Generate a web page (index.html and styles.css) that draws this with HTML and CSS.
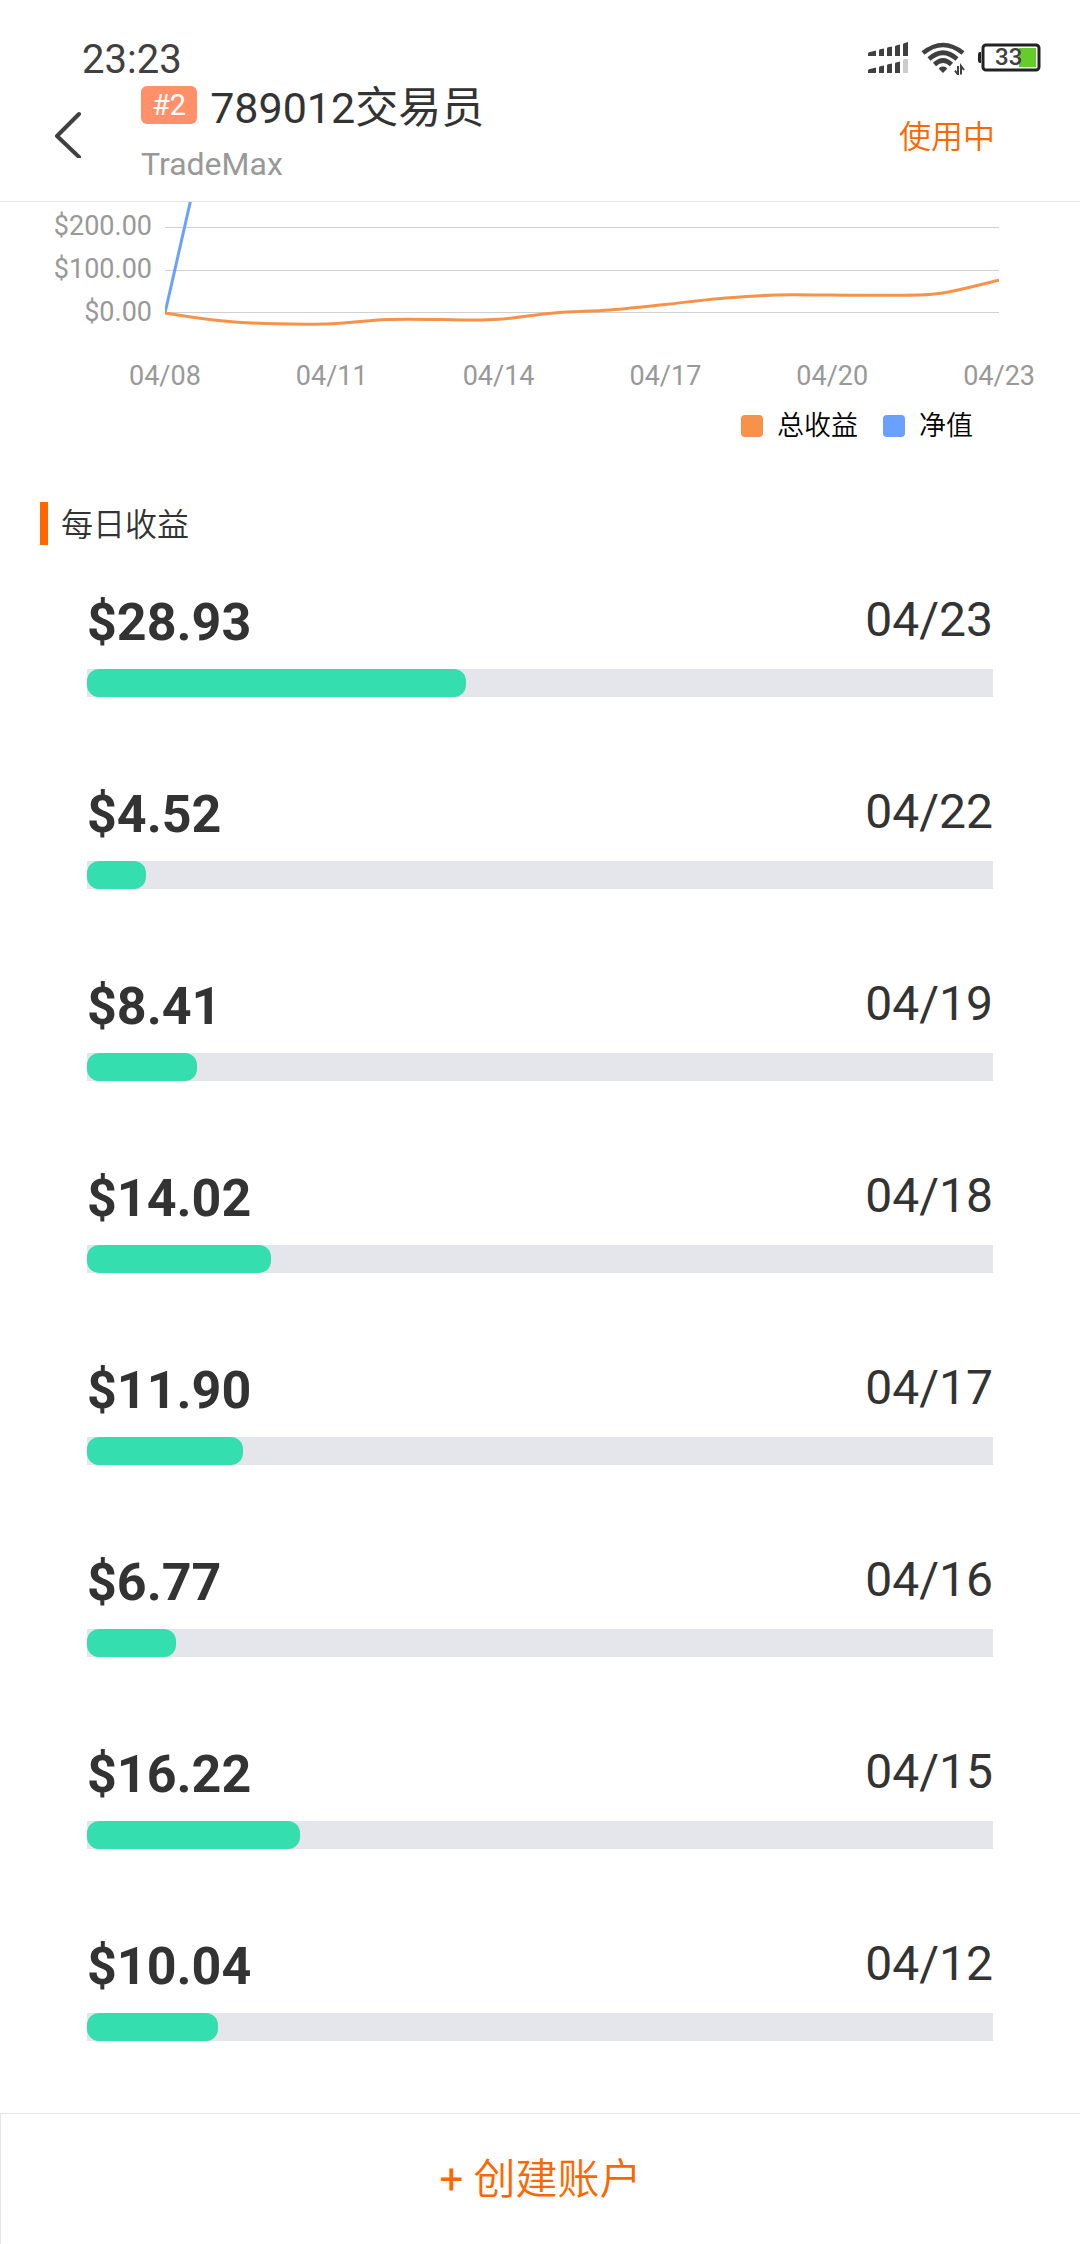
FILE: index.html
```html
<!DOCTYPE html>
<html lang="zh-CN">
<head>
    <meta charset="UTF-8">
    <meta name="viewport" content="width=device-width, initial-scale=1.0">
    <title>789012交易员</title>
    <link rel="stylesheet" href="styles.css">
</head>
<body>
    <div class="status-bar">
        <span class="time">23:23</span>
        <div class="status-icons">
            <svg class="signal" width="40" height="32" viewBox="0 0 40 32" fill="#404040">
                <path d="M0 11.5 Q0 10.5 1 10.2 L8 8.6 V14 H0z"/>
                <path d="M11 8.5 Q11 7.5 12 7.2 L16 6.4 V14 H11z"/>
                <path d="M19 6.6 Q19 5.6 20 5.3 L24 4.4 V14 H19z"/>
                <path d="M27 4.8 Q27 3.8 28 3.5 L32 2.4 V14 H27z"/>
                <path d="M35 2.6 Q35 1.6 36 1.2 L40 0 V14 H35z"/>
                <path d="M0 28.5 Q0 27.5 1 27.2 L8 25.6 V31 H0z"/>
                <path d="M11 25.5 Q11 24.5 12 24.2 L16 23.4 V31 H11z"/>
                <path d="M19 23.6 Q19 22.6 20 22.3 L24 21.4 V31 H19z"/>
                <path d="M27 21.8 Q27 20.8 28 20.5 L32 19.4 V31 H27z"/>
                <path fill="#cccccc" d="M35 19 Q35 17 37 17 H40 V31 H35z"/>
            </svg>
            <svg class="wifi" width="44" height="34" viewBox="0 0 44 34" fill="none" stroke="#404040" stroke-width="4.6">
                <path d="M2 12 Q22 -4 42 12"/>
                <path d="M8 18 Q22 5.5 36 18"/>
                <path d="M13.5 23.5 Q22 15.5 30.5 23.5"/>
                <path fill="#404040" stroke="none" d="M22 32 L18 28 Q18 25.5 22 25.5 Q26 25.5 26 28z"/>
                <path stroke-width="2" d="M37 25 V33.5 L34 29.6 M40 33.5 V25 L43 29"/>
            </svg>
            <div class="battery">
                <svg width="64" height="30" viewBox="0 0 64 30">
                    <path fill="#222222" d="M3 9 V20 H2 Q0 20 0 17 V12 Q0 9 2 9z"/>
                    <rect x="5" y="2" width="56" height="25" rx="3" fill="#ffffff" stroke="#222222" stroke-width="3"/>
                    <rect x="41" y="5" width="17" height="19" fill="#66cc2c"/>
                </svg>
                <span class="battery-level">33</span>
            </div>
        </div>
    </div>

    <header class="header">
        <button class="back" type="button" aria-label="返回">
            <svg width="28" height="48" viewBox="0 0 28 48" fill="none" stroke="#404040" stroke-width="4" stroke-linecap="round" stroke-linejoin="round">
                <path d="M25 4 L3 26 L25 47"/>
            </svg>
        </button>
        <div class="trader">
            <div class="trader-line">
                <span class="badge">#2</span>
                <h1>789012交易员</h1>
            </div>
            <p class="broker">TradeMax</p>
        </div>
        <span class="state">使用中</span>
    </header>

    <main>
        <section class="chart">
            <div class="chart-body">
                <div class="y-labels">
                    <span>$200.00</span>
                    <span>$100.00</span>
                    <span>$0.00</span>
                </div>
                <svg class="plot" viewBox="0 0 834 132" preserveAspectRatio="none">
                    <g class="grid">
                        <path d="M0 25.5 H834"/>
                        <path d="M0 68.5 H834"/>
                        <path d="M0 110.5 H834"/>
                    </g>
                    <path class="line net" d="M0 111 L25.5 -1"/>
                    <path class="line profit" d="M0 111 C18 114 37 117 56 118.7 C74 120.5 93 121.4 111 121.8 C130 122.2 148 122.5 167 121.7 C185 120.8 204 118 222 117.4 C241 116.8 259 117.2 278 117.5 C297 117.9 315 118.6 334 117.3 C352 116 371 112.5 389 111 C408 109.4 426 109.4 445 108 C463 106.7 482 104.5 500 102.5 C519 100.5 537 97.8 556 96.4 C575 95 593 93.6 612 92.9 C630 92.3 649 93 667 93.1 C686 93.2 704 93.4 723 93.2 C741 93.1 760 93.6 778 90.9 C797 88 815 82.5 834 78.3"/>
                </svg>
            </div>
            <div class="x-labels">
                <span>04/08</span>
                <span>04/11</span>
                <span>04/14</span>
                <span>04/17</span>
                <span>04/20</span>
                <span>04/23</span>
            </div>
            <div class="legend">
                <span class="legend-item profit-item">总收益</span>
                <span class="legend-item net-item">净值</span>
            </div>
        </section>

        <section class="daily">
            <h2>每日收益</h2>
            <ul class="daily-list">
                <li>
                    <div class="daily-head"><strong>$28.93</strong><span>04/23</span></div>
                    <div class="track"><div class="fill" style="width: 41.83%"></div></div>
                </li>
                <li>
                    <div class="daily-head"><strong>$4.52</strong><span>04/22</span></div>
                    <div class="track"><div class="fill" style="width: 6.54%"></div></div>
                </li>
                <li>
                    <div class="daily-head"><strong>$8.41</strong><span>04/19</span></div>
                    <div class="track"><div class="fill" style="width: 12.16%"></div></div>
                </li>
                <li>
                    <div class="daily-head"><strong>$14.02</strong><span>04/18</span></div>
                    <div class="track"><div class="fill" style="width: 20.27%"></div></div>
                </li>
                <li>
                    <div class="daily-head"><strong>$11.90</strong><span>04/17</span></div>
                    <div class="track"><div class="fill" style="width: 17.21%"></div></div>
                </li>
                <li>
                    <div class="daily-head"><strong>$6.77</strong><span>04/16</span></div>
                    <div class="track"><div class="fill" style="width: 9.79%"></div></div>
                </li>
                <li>
                    <div class="daily-head"><strong>$16.22</strong><span>04/15</span></div>
                    <div class="track"><div class="fill" style="width: 23.5%"></div></div>
                </li>
                <li>
                    <div class="daily-head"><strong>$10.04</strong><span>04/12</span></div>
                    <div class="track"><div class="fill" style="width: 14.47%"></div></div>
                </li>
            </ul>
        </section>
    </main>

    <footer class="footer">
        <button class="create" type="button"><span class="plus">+</span> 创建账户</button>
    </footer>
</body>
</html>
```
FILE: styles.css
```css
* {
    box-sizing: border-box;
}
body {
    display: flex;
    flex-direction: column;
    min-height: 100vh;
    margin: 0;
    background-color: #fff;
    color: #333;
    font-family: Roboto, 'Noto Sans CJK SC', sans-serif;
}
h1, h2, p, ul {
    margin: 0;
    padding: 0;
    font-weight: 400;
}
button {
    padding: 0;
    border: none;
    background: none;
    font-family: inherit;
    cursor: pointer;
}
svg {
    display: block;
}

/* status bar */
.status-bar {
    display: flex;
    justify-content: space-between;
    align-items: flex-start;
    padding: 37px 38px 0 82px;
}
.time {
    font-size: 40px;
    line-height: 46px;
    color: #404040;
}
.status-icons {
    display: flex;
    align-items: center;
    gap: 13px;
    height: 42px;
}
.battery {
    position: relative;
}
.battery-level {
    position: absolute;
    top: 0;
    left: 17px;
    font-size: 24px;
    font-weight: 500;
    line-height: 29px;
    color: #404040;
}

/* header */
.header {
    display: flex;
    align-items: center;
    padding: 0 85px 17px 54px;
    border-bottom: 1px solid #e5e5e5;
}
.trader {
    flex: 1;
    margin-left: 59px;
}
.trader-line {
    display: flex;
    align-items: flex-start;
    gap: 13px;
}
.badge {
    margin-top: 3px;
    padding: 0 11px;
    border-radius: 6px;
    background-color: #ff906a;
    color: #fff;
    font-size: 29px;
    line-height: 38px;
}
h1 {
    font-size: 43px;
    line-height: 50px;
}
.broker {
    margin-top: 11px;
    color: #999;
    font-size: 32px;
    line-height: 40px;
}
.state {
    color: #ff6600;
    font-size: 32px;
    font-weight: 350;
}

/* chart */
main {
    flex: 1;
}
.chart-body {
    display: flex;
    padding-right: 81px;
}
.y-labels {
    display: flex;
    flex-direction: column;
    width: 165px;
    padding: 3px 13px 0 0;
    color: #999;
    font-size: 27px;
    line-height: 43px;
    text-align: right;
}
.plot {
    flex: 1;
    min-width: 0;
    height: 132px;
}
.plot path {
    fill: none;
    vector-effect: non-scaling-stroke;
}
.grid {
    stroke: #d0d0d4;
    stroke-width: 1px;
}
.line {
    stroke-width: 3px;
}
.net {
    stroke: #6aa1ff;
}
.profit {
    stroke: #f7924a;
}
.x-labels {
    display: flex;
    justify-content: space-between;
    margin-top: 22px;
    padding: 0 45px 0 129px;
    color: #999;
    font-size: 27px;
    line-height: 40px;
}
.legend {
    display: flex;
    justify-content: flex-end;
    gap: 25px;
    margin-top: 10px;
    padding-right: 107px;
    color: #000;
    font-size: 27px;
    font-weight: 350;
    line-height: 40px;
}
.legend-item {
    display: flex;
    align-items: center;
    gap: 14px;
}
.legend-item::before {
    content: '';
    width: 22px;
    height: 22px;
    border-radius: 4px;
}
.profit-item::before {
    background-color: #f7924a;
}
.net-item::before {
    background-color: #6aa1ff;
}

/* daily profit */
.daily {
    padding: 56px 87px 72px 40px;
}
h2 {
    padding: 3px 0 0 13px;
    border-left: 8px solid #ff6600;
    font-size: 32px;
    font-weight: 350;
    line-height: 40px;
}
.daily-list {
    display: flex;
    flex-direction: column;
    gap: 85px;
    margin: 45px 0 0 47px;
    list-style: none;
}
.daily-head {
    display: flex;
    justify-content: space-between;
    align-items: flex-start;
    margin-bottom: 13px;
}
.daily-head strong {
    font-size: 52px;
    font-weight: 700;
    line-height: 66px;
}
.daily-head span {
    font-size: 48px;
    line-height: 60px;
}
.track {
    background-color: #e5e6eb;
}
.fill {
    height: 28px;
    border-radius: 12px;
    background-color: #35deae;
}

/* bottom button */
.footer {
    border-top: 1px solid #e5e5e9;
    border-left: 1px solid #e5e5e9;
}
.create {
    width: 100%;
    padding-top: 2px;
    color: #ff6600;
    font-size: 42px;
    font-weight: 350;
    line-height: 128px;
}
.plus {
    font-weight: 400;
}
```
